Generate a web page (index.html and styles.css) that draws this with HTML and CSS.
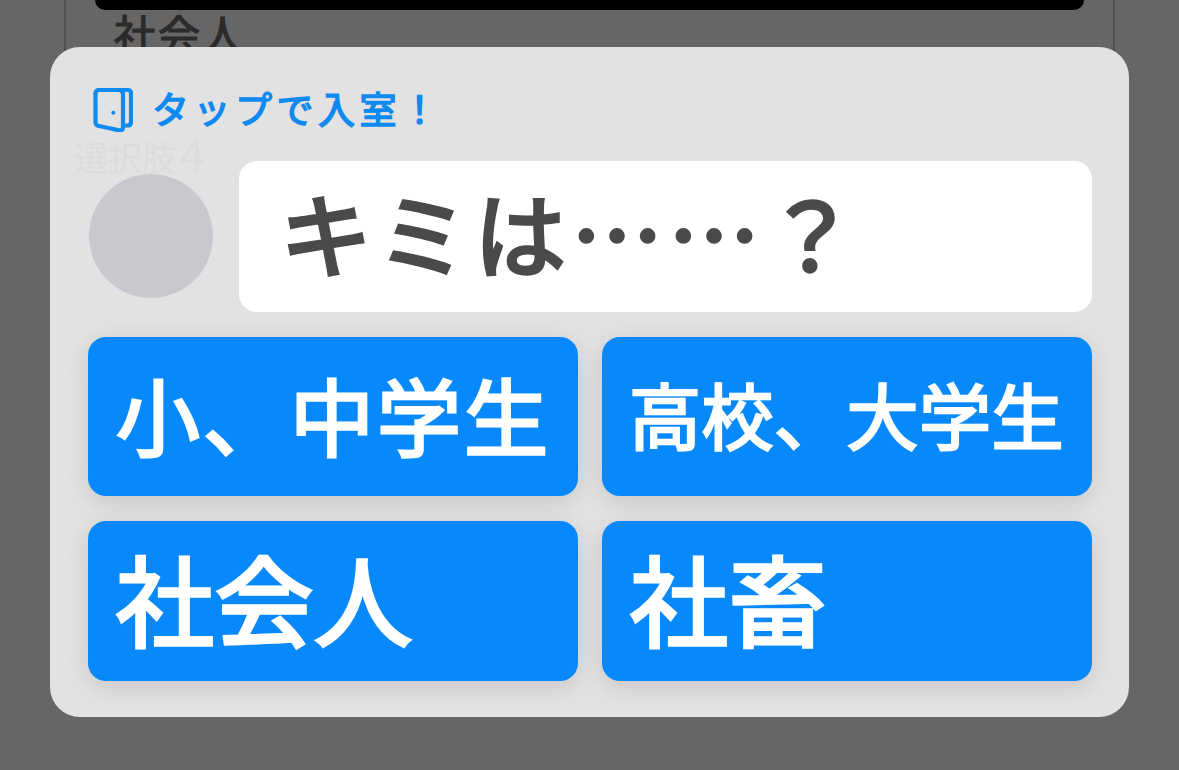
FILE: index.html
```html
<!DOCTYPE html>
<html lang="ja">
<head>
<meta charset="utf-8">
<title>タップで入室！</title>
<link rel="stylesheet" href="styles.css">
</head>
<body>
<div class="screen">
  <div class="frame">
    <div class="black-bar"></div>
    <div class="back-label">社会人</div>
  </div>
</div>
<section class="modal">
  <div class="ghost" aria-hidden="true">
    <div class="ghost-top"></div>
    <div class="ghost-label">選択肢<span class="ghost-digit">4</span></div>
    <div class="ghost-card"></div>
  </div>
  <header class="modal-head">
    <svg class="door" viewBox="0 0 40 44" fill="none" stroke="#0f8af0" stroke-width="4.2" stroke-linejoin="round" stroke-linecap="round">
      <path d="M2.500 5.500Q2.500 2 6 2H34.500Q38 2 38 5.500V34Q38 37.500 34.500 37.500H30"/>
      <path d="M2.500 5.500V34.500Q2.500 37 5 37.700L26 42.300Q30 43 30 39V6Q30 3.500 27 2"/>
      <circle class="knob" cx="20.300" cy="24.700" r="2"/>
    </svg>
    <span class="head-text">タップで入室！</span>
  </header>
  <div class="question">
    <div class="avatar"></div>
    <div class="bubble">キミは……？</div>
  </div>
  <div class="choices">
    <button class="choice choice-md">小、中学生</button>
    <button class="choice choice-sm">高校、大学生</button>
    <button class="choice choice-lg">社会人</button>
    <button class="choice choice-lg">社畜</button>
  </div>
</section>
</body>
</html>
```

FILE: styles.css
```css
* { box-sizing: border-box; }
html, body { margin: 0; height: 100%; }
body {
  width: 1179px;
  height: 770px;
  overflow: hidden;
  background: #666666;
  font-family: "Noto Sans CJK JP", "Noto Sans", sans-serif;
}
.screen { padding: 0 64px; height: 100%; }
.frame {
  height: 60px;
  border-left: 2px solid #4f4f4f;
  border-right: 2px solid #4f4f4f;
  padding: 0 29px;
}
.black-bar {
  height: 10px;
  background: #000;
  border-radius: 0 0 18px 18px;
}
.back-label {
  padding-left: 19px;
  font-size: 42px;
  line-height: 46px;
  letter-spacing: 2px;
  -webkit-text-stroke: 1.200px #2b2b2b;
  color: #2b2b2b;
}
.modal {
  position: absolute;
  left: 50px;
  top: 47px;
  width: 1079px;
  height: 670px;
  background: #e2e2e2;
  border-radius: 30px;
  padding: 41px 37px 0 38px;
  overflow: hidden;
}
.ghost { position: absolute; inset: 0; pointer-events: none; }
.ghost-top {
  position: absolute;
  left: 14px;
  right: 15px;
  top: -40px;
  height: 90px;
  border: 1px solid #e0e0e0;
  border-radius: 16px;
}
.ghost-label {
  position: absolute;
  left: 24px;
  top: 92px;
  font-size: 34px;
  line-height: 36px;
  color: #dcdcdc;
  font-weight: 400;
}
.ghost-digit { font-size: 44px; line-height: 0; margin-left: 4px; }
.ghost-card {
  position: absolute;
  left: 14px;
  right: 15px;
  top: 150px;
  height: 128px;
  border: 1px solid #e0e0e0;
  border-radius: 16px;
}
.modal-head {
  position: relative;
  display: flex;
  align-items: center;
  gap: 19px;
  height: 44px;
  padding-left: 5px;
}
.door { width: 40px; height: 44px; flex: none; }
.knob { fill: #0f8af0; stroke: none; }
.head-text {
  padding-bottom: 4px;
  font-size: 37px;
  line-height: 38px;
  letter-spacing: 4.500px;
  -webkit-text-stroke: 1.500px #0f8af0;
  color: #0f8af0;
}
.question {
  position: relative;
  display: flex;
  align-items: flex-start;
  gap: 26px;
  margin-top: 29px;
  padding-left: 1px;
}
.avatar {
  width: 124px;
  height: 124px;
  flex: none;
  margin-top: 13px;
  border-radius: 50%;
  background: #c8c8ce;
}
.bubble {
  flex: 1;
  height: 151px;
  padding: 15px 0 0 41px;
  background: #fff;
  border-radius: 18px;
  font-size: 92px;
  line-height: 110px;
  letter-spacing: 5px;
  -webkit-text-stroke: 3.500px #4a4a4a;
  color: #4a4a4a;
  white-space: nowrap;
}
.choices {
  position: relative;
  display: grid;
  grid-template-columns: 490px 490px;
  grid-template-rows: 159px 160px;
  gap: 25px 24px;
  margin-top: 25px;
}
.choice {
  display: block;
  margin: 0;
  padding: 0 0 0 28px;
  border: 0;
  border-radius: 18px;
  background: #0789fb;
  color: #fff;
  font-family: inherit;
  font-weight: 400;
  text-align: left;
  white-space: nowrap;
  box-shadow: 0 6px 24px rgba(0, 0, 0, 0.12);
}
.choice-md {
  font-size: 84px;
  line-height: 1;
  letter-spacing: 3px;
  padding-bottom: 6px;
  -webkit-text-stroke: 3px #fff;
}
.choice-sm {
  font-size: 72px;
  line-height: 1;
  letter-spacing: 0.500px;
  padding-bottom: 8px;
  padding-left: 27px;
  -webkit-text-stroke: 2.500px #fff;
}
.choice-lg {
  font-size: 98px;
  line-height: 1;
  letter-spacing: 1px;
  padding-bottom: 10px;
  -webkit-text-stroke: 3.500px #fff;
}
```
